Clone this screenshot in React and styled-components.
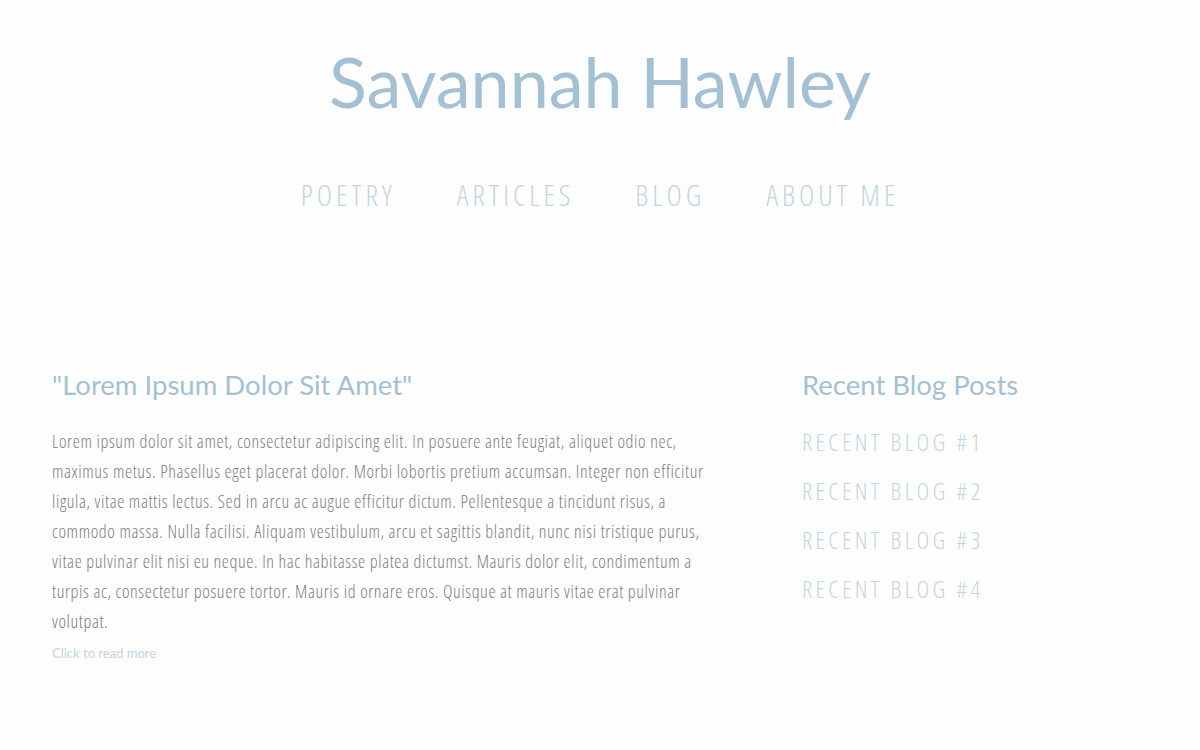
import React from "react";
import styled, { createGlobalStyle } from "styled-components";

const COLORS = {
    bg: "#fdfdfd",
    title: "#a4c1d4",
    nav: "#c3d5e2",
    text: "#7d7d7d",
    link: "#c3d5e2",
};

const GlobalStyle = createGlobalStyle`
    html, body {
        margin: 0;
        padding: 0;
        background: ${COLORS.bg};
    }
`;

const Page = styled.div`
    width: 1200px;
    min-height: 750px;
    background: ${COLORS.bg};
`;

const Header = styled.header`
    display: flex;
    flex-direction: column;
    align-items: center;
    padding-top: 35px;
`;

const SiteTitle = styled.h1`
    margin: 0;
    font-family: "Lato", "Open Sans", sans-serif;
    font-weight: 400;
    font-size: 70px;
    line-height: 92px;
    color: ${COLORS.title};
`;

const Nav = styled.nav`
    display: flex;
    gap: 61px;
    margin-top: 50px;
`;

const NavLink = styled.a`
    font-family: "Open Sans", sans-serif;
    font-stretch: condensed;
    font-weight: 300;
    font-size: 29px;
    line-height: 36px;
    letter-spacing: 4px;
    color: ${COLORS.nav};
    text-decoration: none;
    text-transform: uppercase;
`;

const Main = styled.main`
    display: grid;
    grid-template-columns: 662px 1fr;
    column-gap: 88px;
    padding: 152px 52px 0;
`;

const Heading = styled.h2`
    margin: 0 0 21px;
    font-family: "Lato", "Open Sans", sans-serif;
    font-weight: 400;
    font-size: 27.5px;
    line-height: 40px;
    color: ${COLORS.title};
`;

const Body = styled.p`
    margin: 0;
    font-family: "Open Sans", sans-serif;
    font-stretch: condensed;
    font-weight: 300;
    font-size: 18px;
    line-height: 30px;
    letter-spacing: 0.6px;
    color: ${COLORS.text};
`;

const ReadMore = styled.a`
    display: block;
    margin-top: 9px;
    font-family: "Lato", sans-serif;
    font-size: 13px;
    color: ${COLORS.link};
    text-decoration: none;
`;

const Sidebar = styled.aside`
    display: flex;
    flex-direction: column;
`;

const PostList = styled.ul`
    list-style: none;
    margin: 0;
    padding: 0;
    display: flex;
    flex-direction: column;
    gap: 17px;
`;

const PostLink = styled.li`
    font-family: "Open Sans", sans-serif;
    font-stretch: condensed;
    font-weight: 300;
    font-size: 24px;
    line-height: 32px;
    letter-spacing: 3.4px;
    color: ${COLORS.nav};
`;

const navItems = ["Poetry", "Articles", "Blog", "About Me"];
const posts = ["Recent Blog #1", "Recent Blog #2", "Recent Blog #3", "Recent Blog #4"];

export default function App() {
    return (
        <Page>
            <GlobalStyle />
            <Header>
                <SiteTitle>Savannah Hawley</SiteTitle>
                <Nav>
                    {navItems.map((item) => (
                        <NavLink key={item} href="#">{item}</NavLink>
                    ))}
                </Nav>
            </Header>
            <Main>
                <section>
                    <Heading>"Lorem Ipsum Dolor Sit Amet"</Heading>
                    <Body>
                        Lorem ipsum dolor sit amet, consectetur adipiscing elit. In posuere ante feugiat, aliquet odio nec,
                        maximus metus. Phasellus eget placerat dolor. Morbi lobortis pretium accumsan. Integer non efficitur
                        ligula, vitae mattis lectus. Sed in arcu ac augue efficitur dictum. Pellentesque a tincidunt risus, a
                        commodo massa. Nulla facilisi. Aliquam vestibulum, arcu et sagittis blandit, nunc nisi tristique purus,
                        vitae pulvinar elit nisi eu neque. In hac habitasse platea dictumst. Mauris dolor elit, condimentum a
                        turpis ac, consectetur posuere tortor. Mauris id ornare eros. Quisque at mauris vitae erat pulvinar
                        volutpat.
                    </Body>
                    <ReadMore href="#">Click to read more</ReadMore>
                </section>
                <Sidebar>
                    <Heading>Recent Blog Posts</Heading>
                    <PostList>
                        {posts.map((p) => (
                            <PostLink key={p}>{p.toUpperCase()}</PostLink>
                        ))}
                    </PostList>
                </Sidebar>
            </Main>
        </Page>
    );
}
